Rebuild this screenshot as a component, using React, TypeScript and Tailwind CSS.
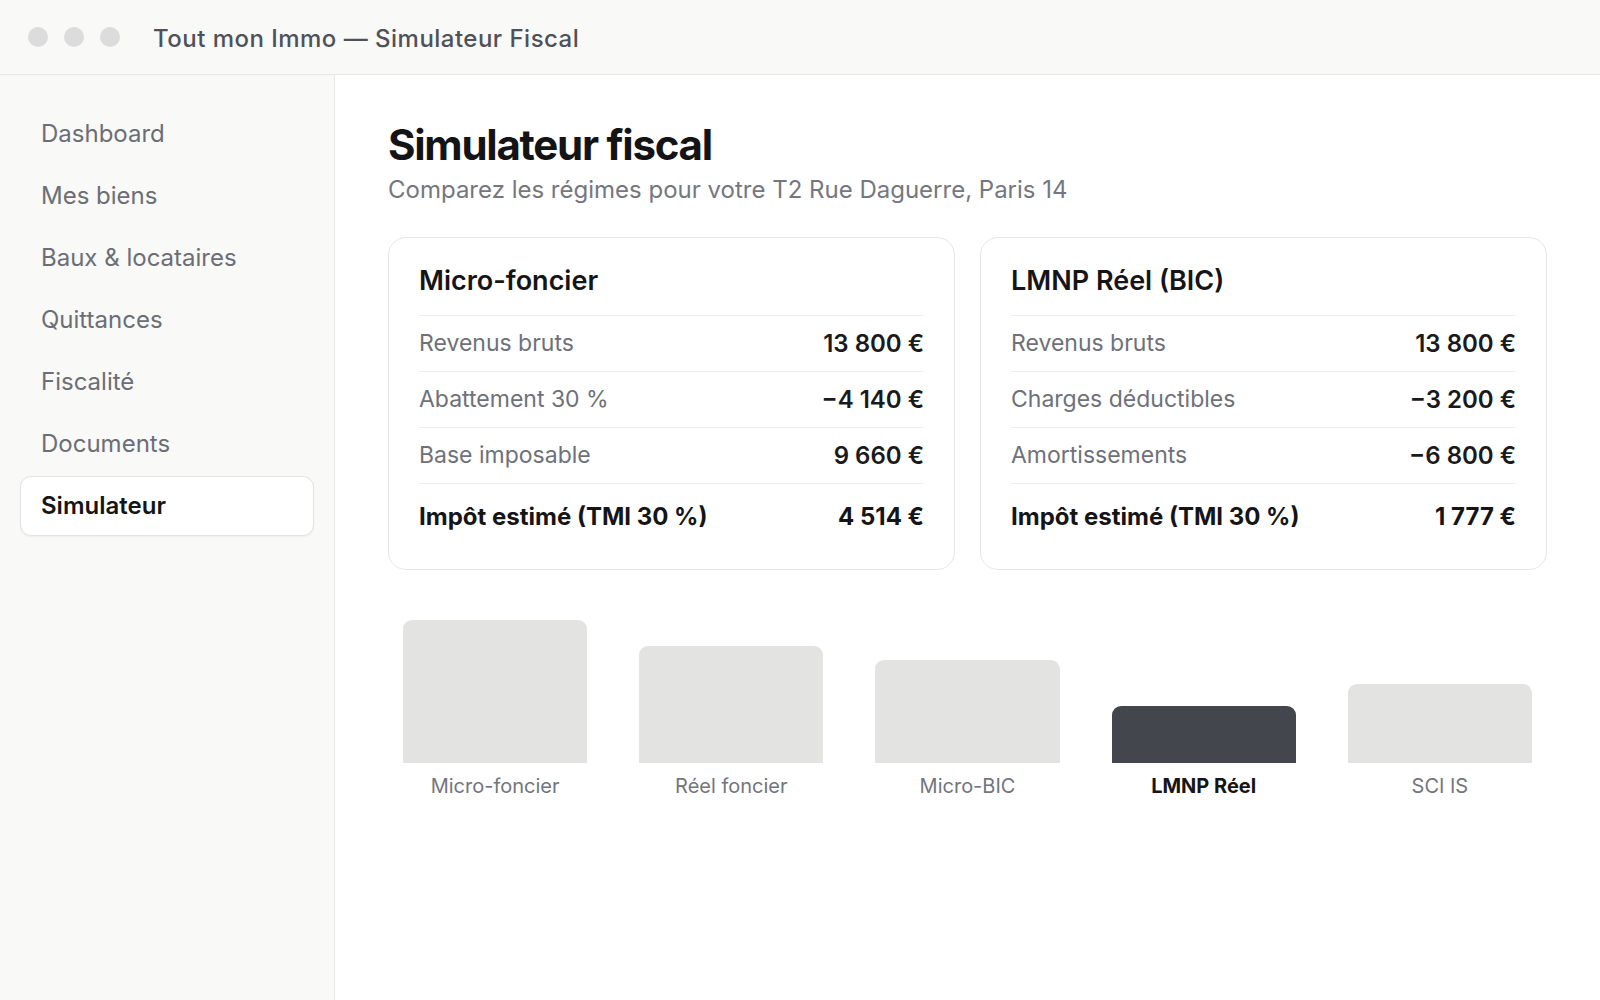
import React from "react";

const nav = ["Dashboard", "Mes biens", "Baux & locataires", "Quittances", "Fiscalité", "Documents", "Simulateur"];

const regimes = [
  {
    title: "Micro-foncier",
    rows: [
      ["Revenus bruts", "13 800 €"],
      ["Abattement 30 %", "−4 140 €"],
      ["Base imposable", "9 660 €"],
    ],
    total: "4 514 €",
  },
  {
    title: "LMNP Réel (BIC)",
    rows: [
      ["Revenus bruts", "13 800 €"],
      ["Charges déductibles", "−3 200 €"],
      ["Amortissements", "−6 800 €"],
    ],
    total: "1 777 €",
  },
];

const bars = [
  { label: "Micro-foncier", h: 143 },
  { label: "Réel foncier", h: 117 },
  { label: "Micro-BIC", h: 103 },
  { label: "LMNP Réel", h: 57, active: true },
  { label: "SCI IS", h: 79 },
];

function RegimeCard({ title, rows, total }: { title: string; rows: string[][]; total: string }) {
  return (
    <div className="bg-white border border-[#e6e6e6] rounded-[18px] px-[30px] pt-[27px] pb-[30px]">
      <h2 className="text-[27px] leading-[32px] font-semibold text-[#151517] pb-[18px] border-b border-[#ededed]">{title}</h2>
      {rows.map(([label, value]) => (
        <div key={label} className="flex justify-between items-center py-[15px] border-b border-[#ededed] leading-[25px]">
          <span className="text-[23px] text-[#6e7179]">{label}</span>
          <span className="text-[24px] font-semibold text-[#1a1a1c]">{value}</span>
        </div>
      ))}
      <div className="flex justify-between items-center pt-[20px] pb-[10px] text-[24px] leading-[25px] font-bold text-[#151517]">
        <span>Impôt estimé (TMI 30 %)</span>
        <span>{total}</span>
      </div>
    </div>
  );
}

export default function App() {
  return (
    <div className="w-[1600px] h-[1000px] flex flex-col bg-white font-['Inter',sans-serif] overflow-hidden">
      <header className="h-[75px] shrink-0 flex items-center bg-[#f9f9f8] border-b border-[#e8e8e7] pl-[28px]">
        <div className="flex gap-[16px]">
          <span className="w-[20px] h-[20px] rounded-full bg-[#dcdcdc]" />
          <span className="w-[20px] h-[20px] rounded-full bg-[#dcdcdc]" />
          <span className="w-[20px] h-[20px] rounded-full bg-[#dcdcdc]" />
        </div>
        <div className="ml-[33px] mt-[3px] text-[24px] font-medium tracking-[0.02em] text-[#4f5158]">Tout mon Immo — Simulateur Fiscal</div>
      </header>
      <div className="flex flex-1 min-h-0">
        <aside className="w-[335px] shrink-0 bg-[#f9f9f8] border-r border-[#e8e8e7] px-[20px] pt-[29px] flex flex-col gap-[2px]">
          {nav.map((item) =>
            item === "Simulateur" ? (
              <div key={item} className="h-[60px] flex items-center px-[20px] bg-white border border-[#e3e3e3] rounded-[11px] shadow-[0_1px_2px_rgba(0,0,0,0.05)] text-[24px] font-semibold text-[#151517]">
                {item}
              </div>
            ) : (
              <div key={item} className="h-[60px] flex items-center px-[21px] text-[24px] text-[#6b6e75]">
                {item}
              </div>
            )
          )}
        </aside>
        <main className="flex-1 px-[53px] pt-[46px]">
          <h1 className="text-[42px] leading-[48px] font-bold tracking-[-0.03em] text-[#141416]">Simulateur fiscal</h1>
          <p className="mt-[7px] text-[24px] leading-[28px] text-[#75777e]">Comparez les régimes pour votre T2 Rue Daguerre, Paris 14</p>
          <div className="mt-[33px] grid grid-cols-2 gap-[25px]">
            {regimes.map((r) => (
              <RegimeCard key={r.title} {...r} />
            ))}
          </div>
          <div className="mt-[50px] px-[15px] grid grid-cols-5 gap-[52px]">
            {bars.map((b) => (
              <div key={b.label} className="flex flex-col items-stretch">
                <div className="h-[143px] flex items-end">
                  <div
                    className={b.active ? "w-full rounded-t-[9px] bg-[#43464d]" : "w-full rounded-t-[9px] bg-[#e3e3e2]"}
                    style={{ height: b.h }}
                  />
                </div>
                <div className={b.active ? "mt-[11px] text-center text-[20px] leading-[24px] font-bold text-[#151517]" : "mt-[11px] text-center text-[20px] leading-[24px] text-[#72757c]"}>
                  {b.label}
                </div>
              </div>
            ))}
          </div>
        </main>
      </div>
    </div>
  );
}
